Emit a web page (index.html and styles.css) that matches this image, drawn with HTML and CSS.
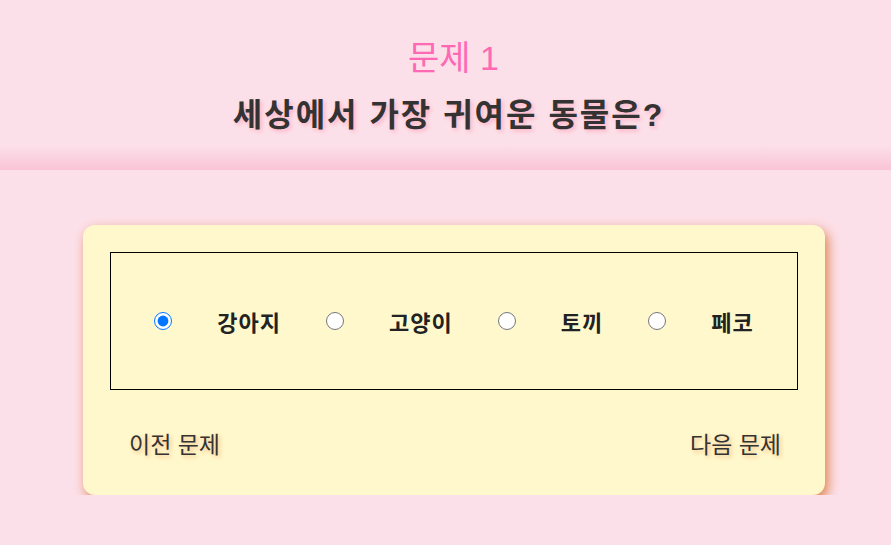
FILE: index.html
```html
<!doctype html>
<html lang="ko">
  <head>
    <meta charset="UTF-8" />
    <meta name="viewport" content="width=device-width, initial-scale=1.0" />
    <title>귀여운 동물 퀴즈</title>
    <link rel="stylesheet" href="styles.css">
  </head>
  <body>
    <header class="quiz-header">
      <h1 class="quiz-number">문제 1</h1>
      <h2 class="quiz-question">세상에서 가장 귀여운 동물은?</h2>
    </header>

    <main class="quiz-card">
      <div class="options">
        <label class="option"><input type="radio" name="animal" checked /><span>강아지</span></label>
        <label class="option"><input type="radio" name="animal" /><span>고양이</span></label>
        <label class="option"><input type="radio" name="animal" /><span>토끼</span></label>
        <label class="option"><input type="radio" name="animal" /><span>페코</span></label>
      </div>
      <div class="nav">
        <button class="nav-btn">이전 문제</button>
        <button class="nav-btn">다음 문제</button>
      </div>
    </main>
  </body>
</html>
```

FILE: styles.css
```css
body {
  margin: 0;
  background-color: #fce0e9;
  font-family: "Liberation Sans", "Noto Sans CJK KR", sans-serif;
  color: #333;
}
.quiz-header {
  height: 170px;
  box-sizing: border-box;
  padding-top: 36px;
  text-align: center;
  background: linear-gradient(to bottom, #fce0e9 0, #fce0e9 145px, #f9c4d6 170px);
}
.quiz-number {
  margin: 0;
  padding-left: 16px;
  font-size: 34px;
  font-weight: normal;
  line-height: 44px;
  color: #ff69b4;
}
.quiz-question {
  margin: 15px 0 0;
  padding-left: 6px;
  font-size: 32px;
  line-height: 40px;
  letter-spacing: 2px;
  font-weight: bold;
  color: #333;
  text-shadow: 2px 2px 4px #ffb0c4;
}
.quiz-card {
  width: 742px;
  height: 270px;
  box-sizing: border-box;
  margin: 55px 0 0 83px;
  padding: 27px 27px 0;
  background-color: #fff8cc;
  border-radius: 12px;
  box-shadow: 3px 5px 12px rgba(220, 120, 60, 0.9);
}
.options {
  height: 138px;
  box-sizing: border-box;
  border: 1px solid #000;
  display: flex;
  justify-content: center;
  align-items: center;
  gap: 45px;
}
.option {
  display: flex;
  align-items: center;
  gap: 45px;
  font-family: "Noto Sans CJK KR", sans-serif;
  font-size: 22px;
  letter-spacing: 1px;
  font-weight: bold;
  color: #222;
}
.option input {
  width: 18px;
  height: 18px;
  margin: 0;
}
.nav {
  display: flex;
  justify-content: space-between;
  margin-top: 36px;
}
.nav-btn {
  background: none;
  border: none;
  padding: 0 17px 3px 19px;
  font-family: "Liberation Sans", "Noto Sans CJK KR", sans-serif;
  font-size: 23px;
  color: #333;
  text-shadow: 2px 2px 4px #f5bf85;
  cursor: pointer;
}
```
